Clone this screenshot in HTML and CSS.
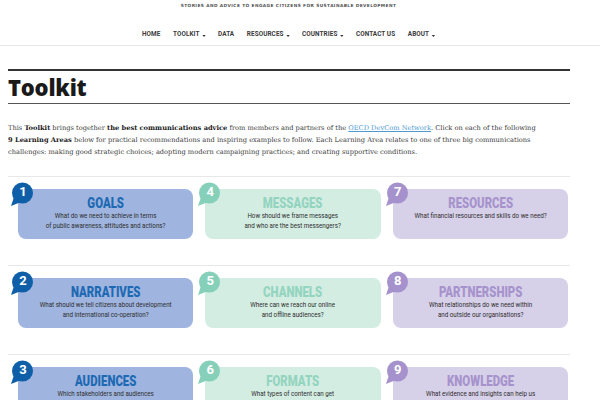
FILE: index.html
```html
<!DOCTYPE html>
<html lang="en">
<head>
<meta charset="utf-8">
<title>Toolkit</title>
<link rel="stylesheet" href="styles.css">
</head>
<body>
<header class="site-header">
  <p class="tagline">STORIES AND ADVICE TO ENGAGE CITIZENS FOR SUSTAINABLE DEVELOPMENT</p>
  <nav class="nav">
    <a class="nav-item" href="#">HOME</a>
    <a class="nav-item has-caret" href="#">TOOLKIT</a>
    <a class="nav-item" href="#">DATA</a>
    <a class="nav-item has-caret" href="#">RESOURCES</a>
    <a class="nav-item has-caret" href="#">COUNTRIES</a>
    <a class="nav-item" href="#">CONTACT US</a>
    <a class="nav-item has-caret" href="#">ABOUT</a>
  </nav>
</header>
<main class="page">
  <h1 class="title">Toolkit</h1>
  <p class="intro">This <b>Toolkit</b> brings together <b>the best communications advice</b> from members and partners of the <a href="#">OECD DevCom Network</a>. Click on each of the following<br><b>9 Learning Areas</b> below for practical recommendations and inspiring examples to follow. Each Learning Area relates to one of three big communications<br>challenges: making good strategic choices; adopting modern campaigning practices; and creating supportive conditions.</p>

  <section class="areas">
    <div class="row">
      <div class="area blue">
        <div class="badge"><svg viewBox="0 0 24 26"><circle cx="12.5" cy="11" r="10.5"/><path d="M4 15 L1 24 L11 20 Z"/></svg><span>1</span></div>
        <div class="card"><h2>GOALS</h2><p>What do we need to achieve in terms<br>of public awareness, attitudes and actions?</p></div>
      </div>
      <div class="area green">
        <div class="badge"><svg viewBox="0 0 24 26"><circle cx="12.5" cy="11" r="10.5"/><path d="M4 15 L1 24 L11 20 Z"/></svg><span>4</span></div>
        <div class="card"><h2>MESSAGES</h2><p>How should we frame messages<br>and who are the best messengers?</p></div>
      </div>
      <div class="area purple">
        <div class="badge"><svg viewBox="0 0 24 26"><circle cx="12.5" cy="11" r="10.5"/><path d="M4 15 L1 24 L11 20 Z"/></svg><span>7</span></div>
        <div class="card"><h2>RESOURCES</h2><p>What financial resources and skills do we need?</p></div>
      </div>
    </div>
    <div class="row">
      <div class="area blue">
        <div class="badge"><svg viewBox="0 0 24 26"><circle cx="12.5" cy="11" r="10.5"/><path d="M4 15 L1 24 L11 20 Z"/></svg><span>2</span></div>
        <div class="card"><h2>NARRATIVES</h2><p>What should we tell citizens about development<br>and international co-operation?</p></div>
      </div>
      <div class="area green">
        <div class="badge"><svg viewBox="0 0 24 26"><circle cx="12.5" cy="11" r="10.5"/><path d="M4 15 L1 24 L11 20 Z"/></svg><span>5</span></div>
        <div class="card"><h2>CHANNELS</h2><p>Where can we reach our online<br>and offline audiences?</p></div>
      </div>
      <div class="area purple">
        <div class="badge"><svg viewBox="0 0 24 26"><circle cx="12.5" cy="11" r="10.5"/><path d="M4 15 L1 24 L11 20 Z"/></svg><span>8</span></div>
        <div class="card"><h2>PARTNERSHIPS</h2><p>What relationships do we need within<br>and outside our organisations?</p></div>
      </div>
    </div>
    <div class="row">
      <div class="area blue">
        <div class="badge"><svg viewBox="0 0 24 26"><circle cx="12.5" cy="11" r="10.5"/><path d="M4 15 L1 24 L11 20 Z"/></svg><span>3</span></div>
        <div class="card"><h2>AUDIENCES</h2><p>Which stakeholders and audiences<br>do we need to engage?</p></div>
      </div>
      <div class="area green">
        <div class="badge"><svg viewBox="0 0 24 26"><circle cx="12.5" cy="11" r="10.5"/><path d="M4 15 L1 24 L11 20 Z"/></svg><span>6</span></div>
        <div class="card"><h2>FORMATS</h2><p>What types of content can get<br>our messages across?</p></div>
      </div>
      <div class="area purple">
        <div class="badge"><svg viewBox="0 0 24 26"><circle cx="12.5" cy="11" r="10.5"/><path d="M4 15 L1 24 L11 20 Z"/></svg><span>9</span></div>
        <div class="card"><h2>KNOWLEDGE</h2><p>What evidence and insights can help us<br>make better decisions?</p></div>
      </div>
    </div>
  </section>
</main>
</body>
</html>
```

FILE: styles.css
```css
* { box-sizing: border-box; }

html, body {
  margin: 0;
  padding: 0;
  background: #ffffff;
}

body {
  font-family: "DejaVu Serif", "Liberation Serif", serif;
  color: #333333;
}

.site-header {
  border-bottom: 1px solid #e6e6e6;
  padding: 3px 23px 7px 0;
  height: 46px;
}

.tagline {
  margin: 0;
  text-align: center;
  font-family: "DejaVu Sans", "Liberation Sans", sans-serif;
  font-size: 4.3px;
  line-height: 6px;
  letter-spacing: 0.42px;
  font-weight: bold;
  color: #555555;
}

.nav {
  display: flex;
  justify-content: center;
  gap: 15px;
  margin-top: 20px;
  transform: scaleX(0.84);
}

.nav-item {
  font-family: "Roboto", "Liberation Sans", sans-serif;
  font-weight: bold;
  font-size: 7.6px;
  line-height: 10px;
  color: #3a3a3a;
  text-decoration: none;
  letter-spacing: 0.1px;
}

.has-caret::after {
  content: "";
  display: inline-block;
  margin-left: 3px;
  border-left: 2.3px solid transparent;
  border-right: 2.3px solid transparent;
  border-top: 2.5px solid #3a3a3a;
  vertical-align: -1px;
}

.page {
  width: 562px;
  margin: 0 0 0 8px;
}

.title {
  margin: 23px 0 0;
  border-top: 2px solid #333333;
  border-bottom: 1px solid #555555;
  font-family: "Open Sans", "DejaVu Sans", sans-serif;
  font-weight: 800;
  font-size: 22px;
  line-height: 32px;
  color: #1a1a1a;
  letter-spacing: -0.2px;
}

.intro {
  margin: 18px 0 0;
  font-family: "DejaVu Serif", "Liberation Serif", serif;
  font-size: 6.66px;
  line-height: 12px;
  color: #3c3c3c;
  padding-bottom: 18px;
}

.intro b { color: #222222; }

.intro a {
  color: #4f9bd0;
  text-decoration: underline;
}

.row {
  display: grid;
  grid-template-columns: repeat(3, 1fr);
  border-top: 1px solid #e8e8e8;
  padding: 12px 0 26px;
}

.area {
  position: relative;
  padding: 0 2px 0 10px;
}

.card {
  height: 50px;
  border-radius: 8px;
  padding: 8px 0 0;
  text-align: center;
  font-family: "Roboto", "Liberation Sans", sans-serif;
}

.card h2 {
  margin: 0;
  font-size: 15px;
  line-height: 13px;
  font-weight: 900;
  letter-spacing: 0;
  transform: scaleX(0.76);
}

.card p {
  margin: 1px 0 0;
  font-size: 7.8px;
  line-height: 10px;
  color: #2e2e2e;
  transform: scaleX(0.8);
}

.badge {
  position: absolute;
  left: 2px;
  top: -7px;
  width: 24px;
  height: 26px;
}

.badge svg {
  position: absolute;
  left: 0;
  top: 0;
  width: 24px;
  height: 26px;
  fill: currentColor;
}

.badge span {
  position: absolute;
  left: 1px;
  top: 3px;
  width: 24px;
  text-align: center;
  font-family: "Roboto", "Liberation Sans", sans-serif;
  font-weight: bold;
  font-size: 13px;
  line-height: 14px;
  color: #ffffff;
}

.blue .badge { color: #0f5fa8; }
.blue .card { background: #9fb5df; }
.blue h2 { color: #1e69b3; }

.green .badge { color: #86d0b9; }
.green .card { background: #d4ede3; }
.green h2 { color: #93d4bf; }

.purple .badge { color: #a592cd; }
.purple .card { background: #d7d0e9; }
.purple h2 { color: #a693cc; }
```
